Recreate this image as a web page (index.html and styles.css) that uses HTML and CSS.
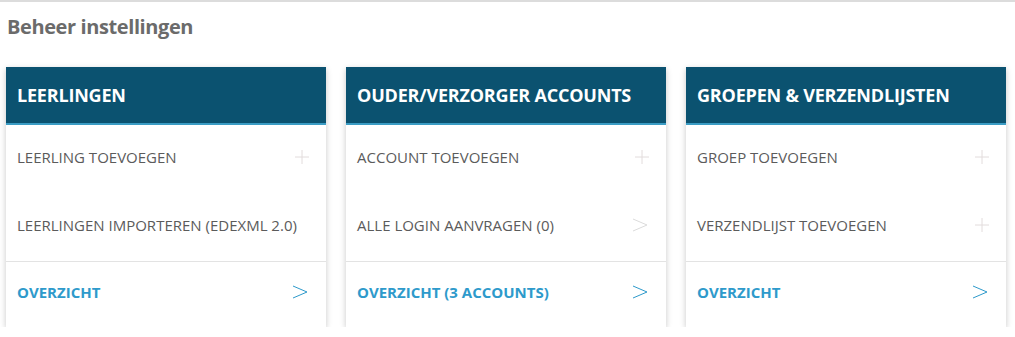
FILE: index.html
```html
<!DOCTYPE html>
<html lang="nl">
<head>
  <meta charset="UTF-8">
  <meta name="viewport" content="width=device-width, initial-scale=1.0">
  <title>Beheer instellingen</title>
  <link rel="stylesheet" href="styles.css">
</head>
<body>
  <h1 class="page-title">Beheer instellingen</h1>

  <div class="card-grid">
    <div class="card">
      <div class="card-header">LEERLINGEN</div>
      <a class="card-row">
        <span>LEERLING TOEVOEGEN</span>
        <svg class="icon icon-plus" viewBox="0 0 16 16"><path d="M8 1v14M1 8h14"/></svg>
      </a>
      <a class="card-row">
        <span>LEERLINGEN IMPORTEREN (EDEXML 2.0)</span>
      </a>
      <a class="card-row card-footer">
        <span>OVERZICHT</span>
        <svg class="icon icon-arrow" viewBox="0 0 16 14"><path d="M1 1l14 6-14 6"/></svg>
      </a>
    </div>

    <div class="card">
      <div class="card-header">OUDER/VERZORGER ACCOUNTS</div>
      <a class="card-row">
        <span>ACCOUNT TOEVOEGEN</span>
        <svg class="icon icon-plus" viewBox="0 0 16 16"><path d="M8 1v14M1 8h14"/></svg>
      </a>
      <a class="card-row">
        <span>ALLE LOGIN AANVRAGEN (0)</span>
        <svg class="icon icon-arrow muted" viewBox="0 0 16 14"><path d="M1 1l14 6-14 6"/></svg>
      </a>
      <a class="card-row card-footer">
        <span>OVERZICHT (3 ACCOUNTS)</span>
        <svg class="icon icon-arrow" viewBox="0 0 16 14"><path d="M1 1l14 6-14 6"/></svg>
      </a>
    </div>

    <div class="card">
      <div class="card-header">GROEPEN &amp; VERZENDLIJSTEN</div>
      <a class="card-row">
        <span>GROEP TOEVOEGEN</span>
        <svg class="icon icon-plus" viewBox="0 0 16 16"><path d="M8 1v14M1 8h14"/></svg>
      </a>
      <a class="card-row">
        <span>VERZENDLIJST TOEVOEGEN</span>
        <svg class="icon icon-plus" viewBox="0 0 16 16"><path d="M8 1v14M1 8h14"/></svg>
      </a>
      <a class="card-row card-footer">
        <span>OVERZICHT</span>
        <svg class="icon icon-arrow" viewBox="0 0 16 14"><path d="M1 1l14 6-14 6"/></svg>
      </a>
    </div>
  </div>
</body>
</html>
```

FILE: styles.css
```css
body {
    margin: 0;
    font-family: "Open Sans", "Noto Sans", sans-serif;
    background-color: white;
    border-top: 2px solid #dcdcdc;
}

.page-title {
    margin: 0;
    padding: 11px 7px 0;
    height: 54px;
    box-sizing: border-box;
    font-size: 20px;
    font-weight: bold;
    color: #6b6b6b;
    letter-spacing: -0.4px;
}

.card-grid {
    display: flex;
    align-items: flex-start;
    gap: 20px;
    padding: 11px 6px 0;
}

.card {
    width: 320px;
    background-color: white;
    box-shadow: 0 2px 6px rgba(0, 0, 0, 0.22);
}

.card-header {
    height: 58px;
    box-sizing: border-box;
    display: flex;
    align-items: center;
    padding: 0 11px 1px;
    background-color: #0b5270;
    border-bottom: 2px solid #3a9cc4;
    color: white;
    font-size: 18px;
    font-weight: bold;
    letter-spacing: -0.2px;
}

.card-row {
    height: 64px;
    display: flex;
    align-items: center;
    justify-content: space-between;
    padding: 0 16px 4px 11px;
    font-size: 15px;
    color: #5b5b5b;
    cursor: pointer;
}

.card-footer {
    height: 59px;
    padding-bottom: 6px;
    border-top: 1px solid #e3e3e3;
    color: #2e9acb;
    font-weight: bold;
}

.icon {
    fill: none;
    stroke-width: 1;
}

.icon-plus {
    width: 16px;
    height: 16px;
    stroke: #e2dcdc;
}

.icon-arrow {
    width: 16px;
    height: 14px;
    margin-right: 2px;
    stroke: #2e9acb;
}

.icon-arrow.muted {
    stroke: #dcdcdc;
}
```
